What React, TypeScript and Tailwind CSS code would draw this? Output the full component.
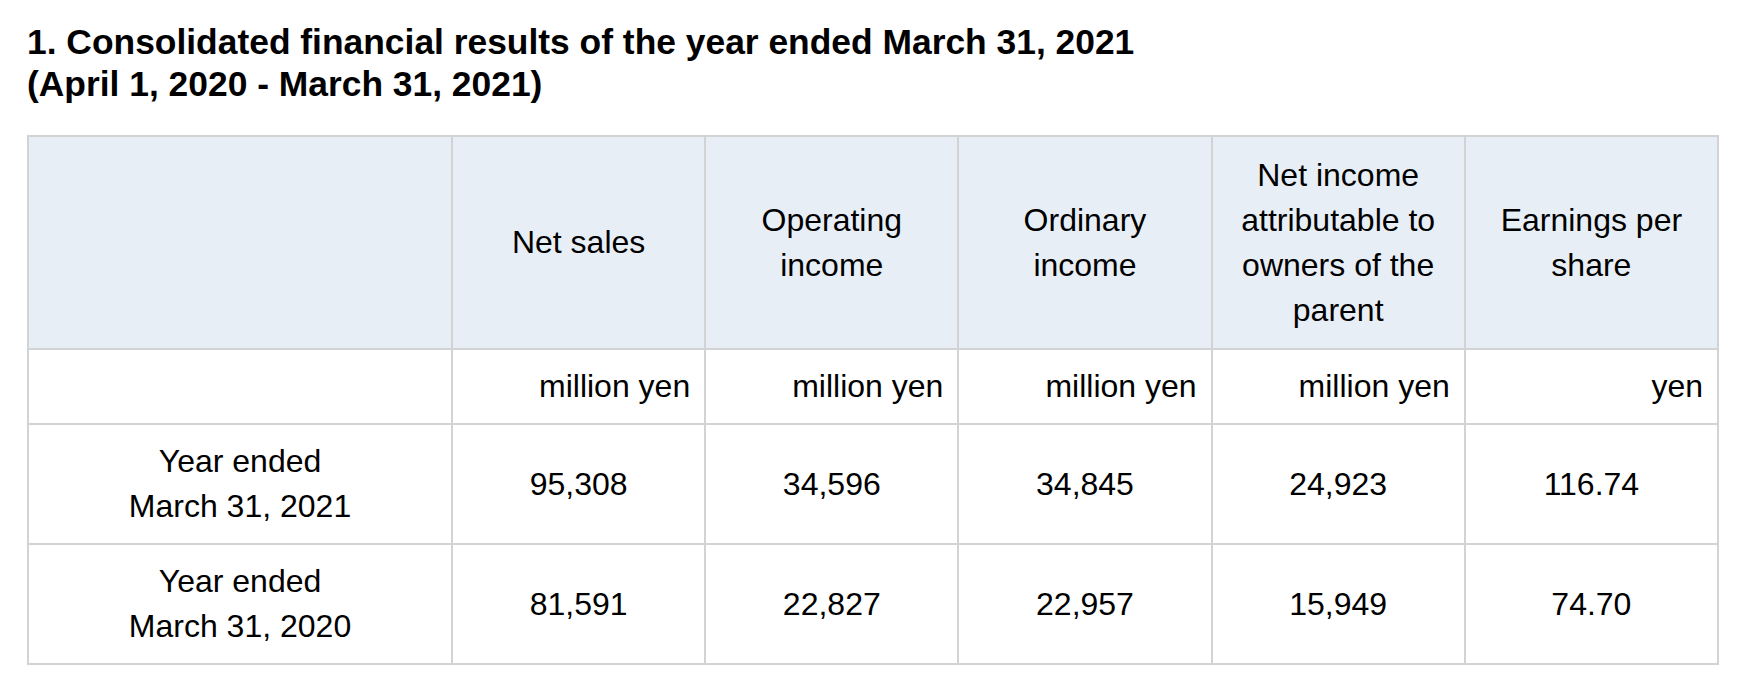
const columns = [
  { label: 'Net sales', unit: 'million yen' },
  { label: 'Operating income', unit: 'million yen' },
  { label: 'Ordinary income', unit: 'million yen' },
  { label: 'Net income attributable to owners of the parent', unit: 'million yen' },
  { label: 'Earnings per share', unit: 'yen' },
];

const rows = [
  { period: ['Year ended', 'March 31, 2021'], values: ['95,308', '34,596', '34,845', '24,923', '116.74'] },
  { period: ['Year ended', 'March 31, 2020'], values: ['81,591', '22,827', '22,957', '15,949', '74.70'] },
];

const cell = 'border-2 border-[#d2d3d5] px-[14px] py-[14px]';
const headCell = 'border-2 border-[#d2d3d5] px-[14px] py-[15.5px] font-normal';

export default function App() {
  return (
    <div className="min-h-screen bg-white px-[27px] pt-[21px] text-black font-['Liberation_Sans',Arial,sans-serif]">
      <h1 className="text-[35.4px] leading-[42px] font-bold">
        1. Consolidated financial results of the year ended March 31, 2021
        <br />
        (April 1, 2020 - March 31, 2021)
      </h1>

      <table className="mt-[30px] w-full table-fixed border-collapse text-[32px] leading-[45px]">
        <colgroup>
          <col className="w-[424px]" />
          {columns.map((c) => (
            <col key={c.label} />
          ))}
        </colgroup>
        <thead>
          <tr className="bg-[#e8eef5]">
            <th className={headCell}></th>
            {columns.map((c) => (
              <th key={c.label} className={`${headCell} text-center align-middle`}>
                {c.label}
              </th>
            ))}
          </tr>
        </thead>
        <tbody>
          <tr>
            <td className={cell}></td>
            {columns.map((c) => (
              <td key={c.label} className={`${cell} text-right`}>
                {c.unit}
              </td>
            ))}
          </tr>
          {rows.map((r) => (
            <tr key={r.period[1]}>
              <td className={`${cell} text-center`}>
                {r.period[0]}
                <br />
                {r.period[1]}
              </td>
              {r.values.map((v, i) => (
                <td key={i} className={`${cell} text-center align-middle`}>
                  {v}
                </td>
              ))}
            </tr>
          ))}
        </tbody>
      </table>
    </div>
  );
}
